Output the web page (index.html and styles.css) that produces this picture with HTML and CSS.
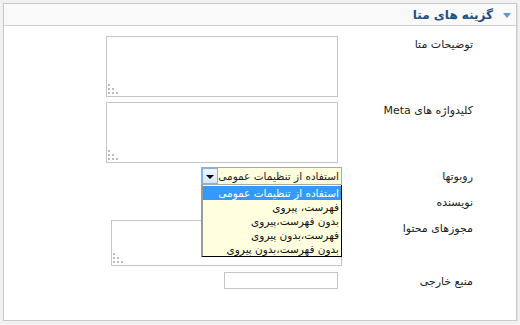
FILE: index.html
```html
<!DOCTYPE html>
<html lang="fa" dir="rtl">
<head>
    <meta charset="UTF-8">
    <title>گزینه های متا</title>
    <link rel="stylesheet" href="styles.css">
</head>
<body>
    <div class="panel">
        <div class="panel-head">
            <span class="toggle"></span>
            <h3>گزینه های متا</h3>
        </div>

        <div class="panel-body">
            <div class="row row-desc">
                <label>توضیحات متا</label>
                <div class="area area-big">
                    <textarea></textarea>
                    <span class="grip"></span>
                </div>
            </div>

            <div class="row row-keys">
                <label>کلیدواژه های Meta</label>
                <div class="area area-big">
                    <textarea></textarea>
                    <span class="grip"></span>
                </div>
            </div>

            <div class="row row-robots">
                <label class="lbl-low">روبوتها</label>
                <div class="select">
                    <span class="select-text">استفاده از تنظیمات عمومی</span>
                    <span class="select-btn"></span>

                    <!-- open dropdown list -->
                    <ul class="options">
                        <li class="active">استفاده از تنظیمات عمومی</li>
                        <li>فهرست، پیروی</li>
                        <li>بدون فهرست،پیروی</li>
                        <li>فهرست،بدون پیروی</li>
                        <li>بدون فهرست،بدون پیروی</li>
                    </ul>
                </div>
            </div>

            <div class="row row-author">
                <label class="lbl-low">نویسنده</label>
                <input type="text" class="text">
            </div>

            <div class="row row-rights">
                <label>مجوزهای محتوا</label>
                <div class="area area-small">
                    <textarea></textarea>
                    <span class="grip"></span>
                </div>
            </div>

            <div class="row row-ext">
                <label class="lbl-low">منبع خارجی</label>
                <input type="text" class="text">
            </div>
        </div>
    </div>
</body>
</html>
```

FILE: styles.css
```css
/* Basic Reset */
* {
    margin: 0;
    padding: 0;
    box-sizing: border-box;
}

body {
    font-family: "DejaVu Sans", Tahoma, sans-serif;
    font-size: 11px;
    background-color: #f1f1f1;
    color: #222;
    padding: 3px 3px 0 3px;
}

/* Panel */
.panel {
    width: 514px;
    height: 318px;
    background: #fff;
    border: 1px solid #c8c8c8;
    box-shadow: 1px 1px 0 #e2e2e2;
    display: flex;
    flex-direction: column;
}

.panel-head {
    height: 22px;
    background: #f9f9f9;
    border-bottom: 1px solid #cfcfcf;
    display: flex;
    align-items: center;
    padding-right: 5px;
}

.toggle {
    width: 0;
    height: 0;
    border-left: 4px solid transparent;
    border-right: 4px solid transparent;
    border-top: 5px solid #5b9bd5;
    margin-top: 2px;
    margin-left: 10px;
}

.panel-head h3 {
    font-size: 12px;
    font-weight: bold;
    color: #1d4f86;
    line-height: 16px;
}

.panel-body {
    padding-top: 10px;
}

/* Rows */
.row {
    display: grid;
    grid-template-columns: 174px auto;
    align-items: start;
    justify-content: start;
}

.row label {
    padding-right: 43px;
    padding-top: 2px;
    line-height: 14px;
    white-space: nowrap;
}

.row .lbl-low {
    padding-top: 3px;
}

.row-desc { margin-bottom: 5px; }
.row-keys { margin-bottom: 4px; }
.row-robots { margin-bottom: 8px; position: relative; z-index: 2; }
.row-author { margin-bottom: 9px; }
.row-rights { margin-bottom: 6px; }

/* Textareas */
.area {
    position: relative;
}

.area textarea {
    display: block;
    border: 1px solid #c4c4c4;
    background: #fff;
    resize: none;
    outline: none;
}

.area-big {
    margin-right: 4px;
}

.area-big textarea {
    width: 232px;
    height: 61px;
}

.area-small textarea {
    width: 231px;
    height: 46px;
}

/* resize grip, bottom left corner */
.grip {
    position: absolute;
    left: 2px;
    bottom: 3px;
    width: 10px;
    height: 10px;
    background:
        linear-gradient(#bbb, #bbb) 0 0 / 2px 2px no-repeat,
        linear-gradient(#bbb, #bbb) 0 4px / 2px 2px no-repeat,
        linear-gradient(#bbb, #bbb) 4px 4px / 2px 2px no-repeat,
        linear-gradient(#bbb, #bbb) 0 8px / 2px 2px no-repeat,
        linear-gradient(#bbb, #bbb) 4px 8px / 2px 2px no-repeat,
        linear-gradient(#bbb, #bbb) 8px 8px / 2px 2px no-repeat;
}

/* Text inputs */
.text {
    width: 114px;
    height: 17px;
    margin-right: 4px;
    border: 1px solid #c4c4c4;
    background: #fff;
    outline: none;
}

.row-author .text {
    height: 18px;
}

/* Select */
.select {
    position: relative;
    width: 141px;
    height: 18px;
    border: 1px solid #a9a9a9;
    background: #ffffe0;
    display: flex;
    align-items: center;
}

.select-text {
    flex: 1;
    min-width: 0;
    overflow: hidden;
    padding-right: 2px;
    font-size: 10.5px;
    line-height: 14px;
    white-space: nowrap;
}

.select-btn {
    flex-shrink: 0;
    width: 16px;
    height: 16px;
    border: 1px solid #7eb4ea;
    background: linear-gradient(#f0f6fd, #d6e7f8);
    display: flex;
    align-items: center;
    justify-content: center;
}

.select-btn::after {
    content: "";
    width: 0;
    height: 0;
    border-left: 4px solid transparent;
    border-right: 4px solid transparent;
    border-top: 4px solid #000;
    margin-top: 1px;
}

.options {
    position: absolute;
    top: 17px;
    right: -1px;
    width: 141px;
    list-style: none;
    background: #ffffe0;
    border: 1px solid #000;
    border-top: none;
    border-left: 2px solid #9a9a9a;
    padding-top: 1px;
}

.options li {
    line-height: 14px;
    height: 14px;
    padding-right: 2px;
    font-size: 10.5px;
    white-space: nowrap;
    overflow: hidden;
    color: #111;
}

.options li.active {
    background: #3399ff;
    color: #fff;
}
```
